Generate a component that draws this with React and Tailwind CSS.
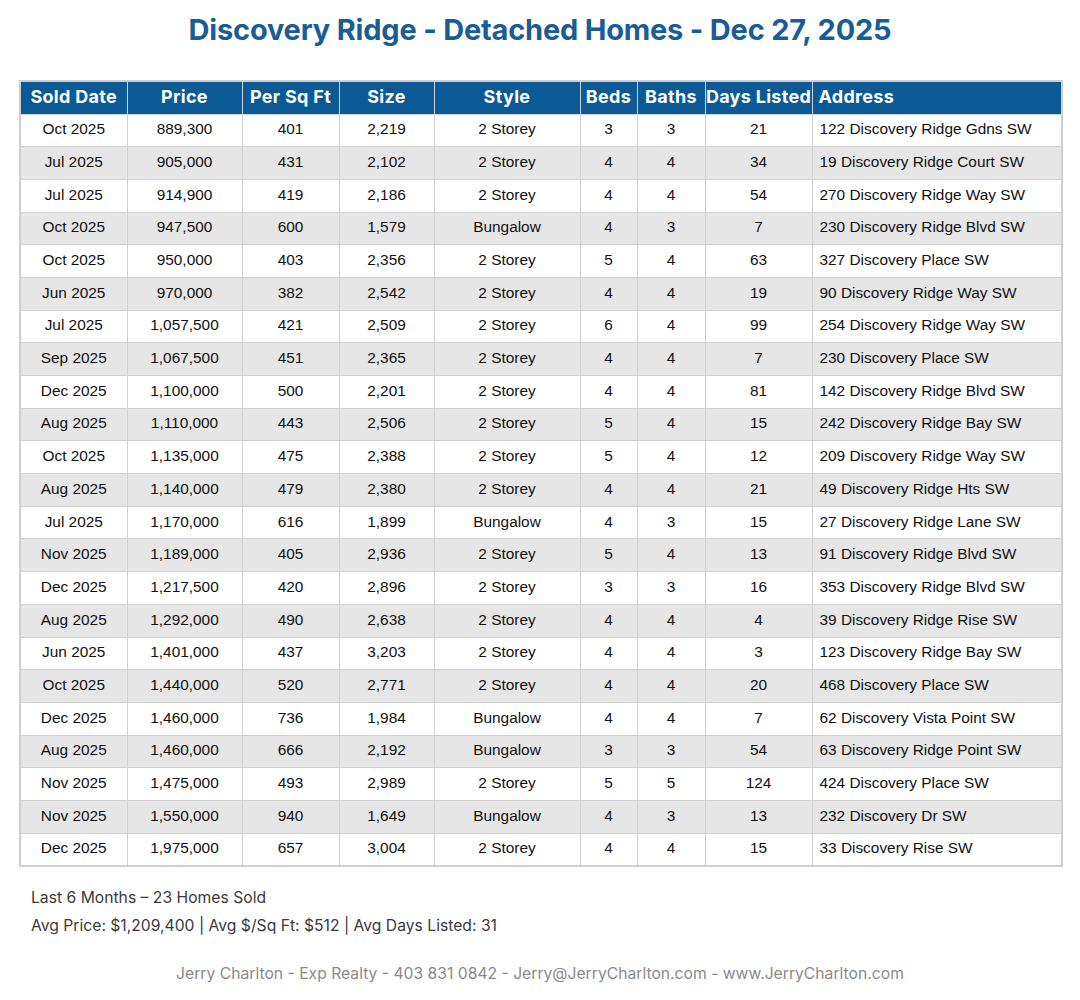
const rows = [
  ["Oct 2025", "889,300", "401", "2,219", "2 Storey", "3", "3", "21", "122 Discovery Ridge Gdns SW"],
  ["Jul 2025", "905,000", "431", "2,102", "2 Storey", "4", "4", "34", "19 Discovery Ridge Court SW"],
  ["Jul 2025", "914,900", "419", "2,186", "2 Storey", "4", "4", "54", "270 Discovery Ridge Way SW"],
  ["Oct 2025", "947,500", "600", "1,579", "Bungalow", "4", "3", "7", "230 Discovery Ridge Blvd SW"],
  ["Oct 2025", "950,000", "403", "2,356", "2 Storey", "5", "4", "63", "327 Discovery Place SW"],
  ["Jun 2025", "970,000", "382", "2,542", "2 Storey", "4", "4", "19", "90 Discovery Ridge Way SW"],
  ["Jul 2025", "1,057,500", "421", "2,509", "2 Storey", "6", "4", "99", "254 Discovery Ridge Way SW"],
  ["Sep 2025", "1,067,500", "451", "2,365", "2 Storey", "4", "4", "7", "230 Discovery Place SW"],
  ["Dec 2025", "1,100,000", "500", "2,201", "2 Storey", "4", "4", "81", "142 Discovery Ridge Blvd SW"],
  ["Aug 2025", "1,110,000", "443", "2,506", "2 Storey", "5", "4", "15", "242 Discovery Ridge Bay SW"],
  ["Oct 2025", "1,135,000", "475", "2,388", "2 Storey", "5", "4", "12", "209 Discovery Ridge Way SW"],
  ["Aug 2025", "1,140,000", "479", "2,380", "2 Storey", "4", "4", "21", "49 Discovery Ridge Hts SW"],
  ["Jul 2025", "1,170,000", "616", "1,899", "Bungalow", "4", "3", "15", "27 Discovery Ridge Lane SW"],
  ["Nov 2025", "1,189,000", "405", "2,936", "2 Storey", "5", "4", "13", "91 Discovery Ridge Blvd SW"],
  ["Dec 2025", "1,217,500", "420", "2,896", "2 Storey", "3", "3", "16", "353 Discovery Ridge Blvd SW"],
  ["Aug 2025", "1,292,000", "490", "2,638", "2 Storey", "4", "4", "4", "39 Discovery Ridge Rise SW"],
  ["Jun 2025", "1,401,000", "437", "3,203", "2 Storey", "4", "4", "3", "123 Discovery Ridge Bay SW"],
  ["Oct 2025", "1,440,000", "520", "2,771", "2 Storey", "4", "4", "20", "468 Discovery Place SW"],
  ["Dec 2025", "1,460,000", "736", "1,984", "Bungalow", "4", "4", "7", "62 Discovery Vista Point SW"],
  ["Aug 2025", "1,460,000", "666", "2,192", "Bungalow", "3", "3", "54", "63 Discovery Ridge Point SW"],
  ["Nov 2025", "1,475,000", "493", "2,989", "2 Storey", "5", "5", "124", "424 Discovery Place SW"],
  ["Nov 2025", "1,550,000", "940", "1,649", "Bungalow", "4", "3", "13", "232 Discovery Dr SW"],
  ["Dec 2025", "1,975,000", "657", "3,004", "2 Storey", "4", "4", "15", "33 Discovery Rise SW"],
];

const headers = ["Sold Date", "Price", "Per Sq Ft", "Size", "Style", "Beds", "Baths", "Days Listed", "Address"];
const widths = [107, 115, 97, 95, 146, 57, 68, 107, 250];

export default function App() {
  return (
    <div className="w-[1080px] h-[1000px] bg-white flex flex-col">
      {/* Titolo */}
      <h1 className="pt-[8px] h-[80px] text-center text-[29px] font-bold text-[#1a5d96] font-['Inter',sans-serif] tracking-[-0.2px]">
        Discovery Ridge - Detached Homes - Dec 27, 2025
      </h1>

      <div className="px-[19px]">
        <table className="w-[1042px] table-fixed border-collapse border-2 border-[#cfcfcf]">
          <colgroup>
            {widths.map((w, i) => (
              <col key={i} style={{ width: w }} />
            ))}
          </colgroup>
          <thead>
            <tr className="bg-[#0b5a96] h-[33px]">
              {headers.map((h, i) => (
                <th
                  key={h}
                  className={`border border-[#c9d3dd] px-0 pb-[3px] text-[18px] tracking-[0.3px] font-bold text-white font-['Inter',sans-serif] whitespace-nowrap ${i === 8 ? "text-left pl-[6px]" : "text-center"}`}
                >
                  {h}
                </th>
              ))}
            </tr>
          </thead>
          <tbody>
            {rows.map((r, ri) => (
              <tr key={ri} className={`h-[32.7px] ${ri % 2 ? "bg-[#e6e6e6]" : "bg-white"}`}>
                {r.map((c, ci) => (
                  <td
                    key={ci}
                    className={`border border-[#d0d0d0] pb-[3px] font-[Liberation_Sans,sans-serif] text-[15.4px] text-[#111] whitespace-nowrap ${ci === 8 ? "text-left pl-[7px]" : "text-center"}`}
                  >
                    {c}
                  </td>
                ))}
              </tr>
            ))}
          </tbody>
        </table>
      </div>

      {/* Riepilogo */}
      <div className="pl-[31px] pt-[17px] text-[15.7px] text-[#3a3a3a] font-['Inter',sans-serif] leading-[28px]">
        <p>Last 6 Months – 23 Homes Sold</p>
        <p>Avg Price: $1,209,400 | Avg $/Sq Ft: $512 | Avg Days Listed: 31</p>
      </div>

      <p className="mt-[22px] text-center text-[15.7px] text-[#8a8a8a] font-['Inter',sans-serif]">
        Jerry Charlton - Exp Realty - 403 831 0842 - Jerry@JerryCharlton.com - www.JerryCharlton.com
      </p>
    </div>
  );
}
